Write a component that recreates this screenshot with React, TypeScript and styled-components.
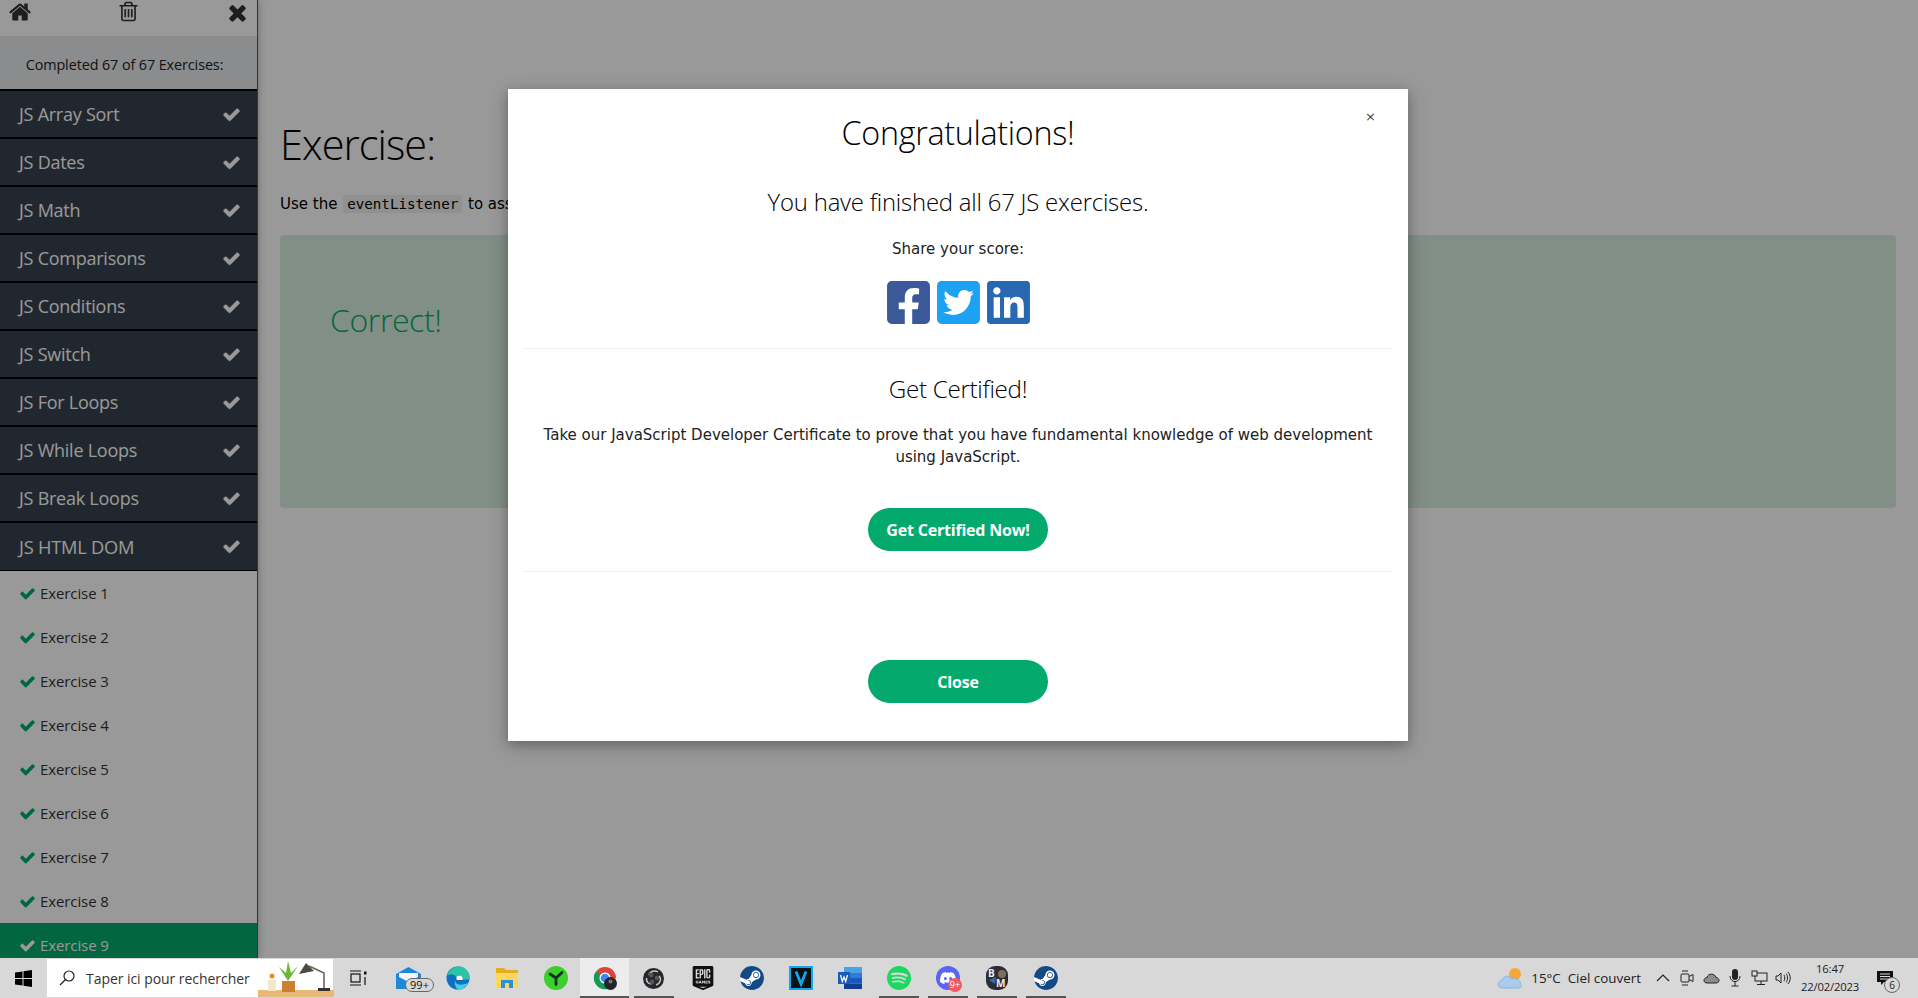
import React from "react";
import styled, { createGlobalStyle } from "styled-components";
import { FaFacebookSquare, FaTwitterSquare, FaLinkedin } from "react-icons/fa";
import { SiEpicgames, SiSteam, SiSpotify, SiDiscord } from "react-icons/si";

const Global = createGlobalStyle`
  html, body { margin: 0; padding: 0; height: 100%; overflow: hidden; }
  body { font-family: "DejaVu Sans", Verdana, sans-serif; color: #000; background: #fff; }
`;

const Page = styled.div`
  display: flex;
  flex-direction: column;
  width: 1918px;
  height: 998px;
  overflow: hidden;
`;
const Viewport = styled.div`
  position: relative;
  flex: 0 0 958px;
  display: flex;
  overflow: hidden;
`;
const Sidebar = styled.aside`
  flex: 0 0 258px;
  background: #fff;
  box-shadow: 0 0 8px rgba(0,0,0,.3);
  border-right: 1px solid #555;
  box-sizing: border-box;
  overflow: hidden;
  z-index: 1;
`;
const SideTop = styled.div`
  height: 36px;
  display: flex;
  justify-content: space-between;
  align-items: flex-start;
  padding: 0 7px 0 8px;
  box-sizing: border-box;
  color: #333;
`;
const Completed = styled.div`
  height: 53px;
  background: #e7e9eb;
  font-family: "Open Sans", sans-serif;
  font-size: 14.4px;
  color: #222;
  display: flex;
  align-items: center;
  justify-content: center;
  padding: 3px 8px 0 0;
  box-sizing: border-box;
  letter-spacing: -0.1px;
`;
const NavRow = styled.div`
  height: 48px;
  background: #38424d;
  border-top: 2px solid #000;
  box-sizing: border-box;
  display: flex;
  align-items: center;
  justify-content: space-between;
  padding: 0 16px 0 19px;
  color: #fff;
  font-family: "Open Sans", sans-serif;
  font-size: 18px;
  letter-spacing: -0.25px;
  &:first-of-type { border-top-width: 3px; }
`;
const NavRowLast = styled(NavRow)`
  border-bottom: 1px solid #000;
  height: 50px;
  font-size: 18.3px;
  padding-bottom: 1px;
`;
const ExRow = styled.div<{ $active?: boolean }>`
  height: 44px;
  display: flex;
  align-items: center;
  gap: 4px;
  padding-left: 19px;
  font-family: "Open Sans", sans-serif;
  font-size: 15px;
  letter-spacing: -0.1px;
  color: ${(p) => (p.$active ? "#fff" : "#333")};
  background: ${(p) => (p.$active ? "#04aa6d" : "transparent")};
  svg { color: ${(p) => (p.$active ? "#fff" : "#04aa6d")}; }
`;
const Main = styled.main`
  flex: 1;
  padding: 115px 22px 0 22px;
  min-width: 0;
`;
const ExerciseTitle = styled.h1`
  margin: 0;
  font-family: "Open Sans", sans-serif;
  font-weight: 300;
  font-size: 41.5px;
  line-height: 58px;
  letter-spacing: -0.95px;
`;
const Instruction = styled.p`
  margin: 19px 0 0;
  font-size: 15px;
  line-height: 24px;
  white-space: nowrap;
`;
const Code = styled.code`
  font-family: "DejaVu Sans Mono", monospace;
  font-size: 14.2px;
  background: #f1f1f1;
  padding: 1px 4px;
  border-radius: 2px;
  margin: 0 1px;
`;
const Panel = styled.div`
  margin-top: 19px;
  height: 273px;
  background: #d9eee1;
  border-radius: 4px;
  padding: 64px 50px 0;
  box-sizing: border-box;
`;
const Correct = styled.div`
  font-family: "Open Sans", sans-serif;
  font-size: 32px;
  line-height: 42px;
  color: #04aa6d;
  letter-spacing: -0.4px;
  font-weight: 300;
`;
const Overlay = styled.div`
  position: absolute;
  inset: 0;
  background: rgba(0,0,0,.4);
  z-index: 2;
`;
const Modal = styled.div`
  position: absolute;
  left: 508px;
  top: 89px;
  width: 900px;
  height: 652px;
  background: #fff;
  box-shadow: 0 4px 10px 0 rgba(0,0,0,.2), 0 4px 20px 0 rgba(0,0,0,.19);
  text-align: center;
  padding: 0 16px;
  box-sizing: border-box;
  z-index: 3;
`;
const ModalClose = styled.span`
  position: absolute;
  top: 19px;
  right: 32px;
  font-size: 13px;
  line-height: 18px;
  color: #444;
`;
const ModalTitle = styled.h2`
  margin: 0;
  padding-top: 22px;
  font-family: "Open Sans", sans-serif;
  font-weight: 300;
  font-size: 32.3px;
  line-height: 42px;
  letter-spacing: -0.3px;
`;
const ModalSub = styled.div`
  margin-top: 34px;
  font-family: "Open Sans", sans-serif;
  font-weight: 300;
  font-size: 23.9px;
  line-height: 30px;
  letter-spacing: -0.2px;
`;
const Share = styled.p`
  margin: 20px 0 0;
  font-size: 15px;
  line-height: 24px;
  color: #222;
`;
const Socials = styled.div`
  margin-top: 20px;
  display: flex;
  justify-content: center;
  gap: 7px;
  height: 43px;
  align-items: center;
`;
const Social = styled.span<{ $c: string }>`
  display: block;
  width: 43px;
  height: 43px;
  color: ${(p) => p.$c};
  svg { display: block; width: 43px; height: 49px; margin-top: -3px; }
`;
const Rule = styled.hr<{ $top: number }>`
  border: 0;
  border-top: 1px solid #eee;
  margin: ${(p) => p.$top}px 0 0;
`;
const CertTitle = styled.h3`
  margin: 25px 0 0;
  font-family: "Open Sans", sans-serif;
  font-weight: 300;
  font-size: 24.2px;
  line-height: 30px;
  letter-spacing: -0.3px;
`;
const CertText = styled.p`
  margin: 20px auto 0;
  width: 850px;
  font-size: 15px;
  line-height: 22px;
  color: #222;
`;
const Pill = styled.div`
  display: flex;
  align-items: center;
  justify-content: center;
  margin: 0 auto;
  width: 180px;
  height: 43px;
  background: #04aa6d;
  color: #fff;
  border-radius: 25px;
  font-family: "Open Sans", sans-serif;
  font-weight: 700;
  font-size: 16px;
  letter-spacing: -0.2px;
`;
const PillTop = styled(Pill)`
  margin-top: 40px;
`;
const PillBottom = styled(Pill)`
  margin-top: 88px;
`;

const Taskbar = styled.footer`
  flex: 0 0 40px;
  display: flex;
  align-items: stretch;
  background: #d8d8d8;
  font-family: "Open Sans", sans-serif;
  color: #222;
`;
const StartBtn = styled.div`
  flex: 0 0 47px;
  display: flex;
  align-items: center;
  justify-content: center;
`;
const Search = styled.div`
  flex: 0 0 286px;
  margin: 1px 0;
  background: #fff;
  display: flex;
  align-items: center;
  position: relative;
  font-size: 14px;
  color: #333;
  letter-spacing: -0.05px;
  padding-left: 11px;
  gap: 10px;
  box-sizing: border-box;
`;
const SearchArt = styled.svg`
  position: absolute;
  right: -1px;
  top: 0;
`;
const TaskIcons = styled.div`
  display: flex;
  align-items: stretch;
`;
const TaskSlot = styled.div<{ $open?: boolean; $active?: boolean }>`
  position: relative;
  width: 49px;
  display: flex;
  align-items: center;
  justify-content: center;
  background: ${(p) => (p.$active ? "#ececec" : "transparent")};
  &::after {
    content: "";
    display: ${(p) => (p.$open ? "block" : "none")};
    position: absolute;
    left: 4.5px;
    right: 4.5px;
    bottom: 0;
    height: 2px;
    background: #555;
  }
`;
const TaskViewSlot = styled(TaskSlot)`
  width: 51px;
  padding-right: 2px;
  box-sizing: border-box;
`;
const ActiveSlot = styled(TaskSlot)`
  &::after { left: 0; right: 0; }
`;
const Badge = styled.span`
  position: absolute;
  left: 21px;
  top: 20px;
  width: 27px;
  height: 12px;
  font-size: 11px;
  line-height: 12px;
  text-align: center;
  background: #d8d8d8;
  border: 1px solid #666;
  border-radius: 7px;
  color: #111;
`;
const RedBadge = styled.span`
  position: absolute;
  left: 25px;
  top: 20px;
  width: 14px;
  height: 14px;
  border-radius: 50%;
  background: #ee5a60;
  color: #fff;
  font-size: 9px;
  line-height: 14px;
  text-align: center;
`;
const RoundIcon = styled.span<{ $bg: string; $fg: string }>`
  display: flex;
  align-items: center;
  justify-content: center;
  width: 24px;
  height: 24px;
  border-radius: 50%;
  background: ${(p) => p.$bg};
  color: ${(p) => p.$fg};
`;
const Tray = styled.div`
  margin-left: auto;
  display: flex;
  align-items: center;
  font-size: 13.4px;
  color: #222;
`;
const Weather = styled.div`
  display: flex;
  align-items: center;
  gap: 8px;
  margin-right: 10px;
  white-space: nowrap;
`;
const TrayIcons = styled.div`
  display: flex;
  align-items: center;
`;
const TraySlot = styled.span`
  width: 24px;
  display: flex;
  align-items: center;
  justify-content: center;
`;
const Clock = styled.div`
  width: 70px;
  text-align: center;
  font-size: 11.3px;
  line-height: 18px;
  letter-spacing: -0.2px;
`;
const Notif = styled.div`
  position: relative;
  width: 53px;
  height: 100%;
  display: flex;
  align-items: center;
  padding-left: 12px;
  box-sizing: border-box;
`;
const NotifBadge = styled.span`
  position: absolute;
  left: 19px;
  top: 19px;
  width: 14px;
  height: 14px;
  border-radius: 50%;
  border: 1px solid #666;
  background: #d8d8d8;
  font-size: 10px;
  line-height: 14px;
  text-align: center;
`;

const Fa4 = ({ d, size }: { d: string; size: number }) => (
  <svg width={size} height={size} viewBox="0 0 1792 1792" fill="currentColor" style={{ display: "block", flex: "none" }}>
    <path d={d} />
  </svg>
);
const CHECK = "M1671 566q0 40-28 68l-724 724-136 136q-28 28-68 28t-68-28l-136-136-362-362q-28-28-28-68t28-68l136-136q28-28 68-28t68 28l294 295 656-657q28-28 68-28t68 28l136 136q28 28 28 68z";
const CLOSE = "M1490 1322q0 40-28 68l-136 136q-28 28-68 28t-68-28l-294-294-294 294q-28 28-68 28t-68-28l-136-136q-28-28-28-68t28-68l294-294-294-294q-28-28-28-68t28-68l136-136q28-28 68-28t68 28l294 294 294-294q28-28 68-28t68 28l136 136q28 28 28 68t-28 68l-294 294 294 294q28 28 28 68z";
const HOME = "M1472 992v480q0 26-19 45t-45 19h-384v-384h-256v384h-384q-26 0-45-19t-19-45v-480q0-1 .5-3t.5-3l575-474 575 474q1 2 1 6zm223-69l-62 74q-8 9-21 11h-3q-13 0-21-7l-692-577-692 577q-12 8-24 7-13-2-21-11l-62-74q-8-10-7-23.500t11-21.500l719-599q32-26 76-26t76 26l244 204v-195q0-14 9-23t23-9h192q14 0 23 9t9 23v408l219 182q10 8 11 21.500t-7 23.500z";
const TRASH = "M704 736v576q0 14-9 23t-23 9h-64q-14 0-23-9t-9-23v-576q0-14 9-23t23-9h64q14 0 23 9t9 23zm256 0v576q0 14-9 23t-23 9h-64q-14 0-23-9t-9-23v-576q0-14 9-23t23-9h64q14 0 23 9t9 23zm256 0v576q0 14-9 23t-23 9h-64q-14 0-23-9t-9-23v-576q0-14 9-23t23-9h64q14 0 23 9t9 23zm128 724v-948h-896v948q0 22 7 40.500t14.500 27 10.500 8.500h832q3 0 10.500-8.500t14.500-27 7-40.500zm-672-1076h448l-48-117q-7-9-17-11h-317q-10 2-17 11zm928 32v64q0 14-9 23t-23 9h-96v948q0 83-47 143.500t-113 60.500h-832q-66 0-113-58.500t-47-141.500v-952h-96q-14 0-23-9t-9-23v-64q0-14 9-23t23-9h309l70-167q15-37 54-63t79-26h320q40 0 79 26t54 63l70 167h309q14 0 23 9t9 23z";

const WinLogo = () => (
  <svg width="17" height="17" viewBox="0 0 17 17" fill="#000">
    <path d="M0 2.500 L7.500 1.500 V8 H0 Z M8.500 1.300 L17 0 V8 H8.500 Z M0 9 H7.500 V15.500 L0 14.500 Z M8.500 9 H17 V17 L8.500 15.700 Z" />
  </svg>
);
const TaskView = () => (
  <svg width="18" height="16" viewBox="0 0 18 16" fill="none" stroke="#111" strokeWidth="1.200">
    <path d="M1 1 H12 M1 15 H12" />
    <rect x="2" y="4" width="9" height="8" />
    <rect x="15" y="1.500" width="2.500" height="3" fill="#111" stroke="none" />
    <path d="M16 7 V15" />
  </svg>
);
const Chrome = () => (
  <svg width="24" height="24" viewBox="0 0 24 24">
    <circle cx="12" cy="12" r="11" fill="#db4437" />
    <path d="M12 12 L2.500 17.500 A11 11 0 0 1 3 5.500 Z" fill="#0f9d58" />
    <path d="M12 12 L2.500 17.500 A11 11 0 0 0 20 20 Z" fill="#0f9d58" />
    <path d="M12 12 L23 12 A11 11 0 0 1 20 20 Z" fill="#f4b400" />
    <circle cx="12" cy="12" r="5.500" fill="#fff" />
    <circle cx="12" cy="12" r="4.300" fill="#4285f4" />
    <circle cx="17.500" cy="17.500" r="6.500" fill="#23252a" />
    <circle cx="17.500" cy="15.500" r="2" fill="#777" />
  </svg>
);
const Edge = () => (
  <svg width="24" height="24" viewBox="0 0 24 24">
    <circle cx="12" cy="12" r="11.500" fill="#0f6fc0" />
    <path d="M1 10 C3 3 9 .5 13 .5 C20 .5 24 7 23.500 13.500 L11 14 C11 10 6 6 1 10 Z" fill="#2cc4a4" />
    <path d="M9 14 C9 19 15 20 22 17 C20 21 16 23.500 12 23.500 C10 22 8 18 9 14 Z" fill="#48d0e8" />
    <path d="M11 14 C9 10 13 9 15 10 C17 11 17 13 16 14 Z" fill="#fff" />
  </svg>
);
const Folder = () => (
  <svg width="22" height="22" viewBox="0 0 22 22">
    <path d="M0 1 H8 L10 3 H22 V21 H0 Z" fill="#e6ad22" />
    <rect x="0" y="6" width="22" height="15" fill="#fbd760" />
    <rect x="5" y="13" width="12" height="8" fill="#2f8fd6" />
    <rect x="9" y="16" width="4" height="5" fill="#fbd760" />
  </svg>
);
const GreenApp = () => (
  <svg width="24" height="24" viewBox="0 0 24 24">
    <circle cx="12" cy="12" r="12" fill="#3ccf2e" />
    <path d="M6 8 L12 12 L18 6.500 M12 12 V18.500" stroke="#10301a" strokeWidth="2.800" fill="none" strokeLinecap="round" />
  </svg>
);
const Mail = () => (
  <svg width="25" height="22" viewBox="0 0 25 22">
    <path d="M0 7 L12.500 0 L25 7 V22 H0 Z" fill="#1e88d8" />
    <path d="M3 6 H22 V10 L12.500 15 L3 10 Z" fill="#f2f8fd" />
  </svg>
);
const Obs = () => (
  <svg width="21" height="21" viewBox="0 0 21 21">
    <circle cx="10.500" cy="10.500" r="10.500" fill="#26262b" />
    <path d="M6 7 C7 3 12 2 15 4 M16 8 C19 11 17 16 13 17 M9.500 15 C6 17 3 14 3.500 10" stroke="#c8c8cc" strokeWidth="1.500" fill="none" />
    <circle cx="8" cy="7" r="2.400" fill="#555" />
    <circle cx="14" cy="10" r="2.400" fill="#555" />
    <circle cx="9" cy="14" r="2.400" fill="#555" />
  </svg>
);
const Vegas = () => (
  <svg width="24" height="24" viewBox="0 0 24 24">
    <rect x="1" y="1" width="22" height="22" fill="#0c1116" stroke="#12a7ea" strokeWidth="2" />
    <path d="M7 5.500 L12 18 L17 5.500" stroke="#12a7ea" strokeWidth="2.800" fill="none" />
  </svg>
);
const Word = () => (
  <svg width="24" height="22" viewBox="0 0 24 22">
    <rect x="6" y="0" width="18" height="5.500" fill="#41a5ee" />
    <rect x="6" y="5.500" width="18" height="5.500" fill="#2b7cd3" />
    <rect x="6" y="11" width="18" height="5.500" fill="#185abd" />
    <rect x="6" y="16.500" width="18" height="5.500" fill="#103f91" />
    <rect x="0" y="5" width="12" height="12" fill="#1a5bbd" />
    <path d="M2.500 8 L4.300 14.500 L6 10 L7.700 14.500 L9.500 8" stroke="#fff" strokeWidth="1.200" fill="none" />
  </svg>
);
const Game = () => (
  <svg width="22" height="24" viewBox="0 0 22 24">
    <rect x="0" y="0" width="22" height="24" rx="9" fill="#2b2d33" />
    <circle cx="16" cy="8" r="4" fill="#7a6f60" />
    <path d="M3 14 L10 11 L9 18 Z" fill="#3a6aa8" />
    <text x="2" y="11" fontFamily="Open Sans, sans-serif" fontSize="10" fontWeight="700" fill="#eee">B</text>
    <text x="10" y="21" fontFamily="Open Sans, sans-serif" fontSize="10" fontWeight="700" fill="#eee">M</text>
  </svg>
);
const CloudSun = () => (
  <svg width="26" height="24" viewBox="0 0 26 24">
    <circle cx="18" cy="8" r="6" fill="#f4a73b" />
    <path d="M5 22 C0 22 0 15 5 14.500 C6 9 13 9 15 13 C19 11 25 15 23 18.500 C26 20 24 22 21 22 Z" fill="#a9cbee" stroke="#7cade2" strokeWidth=".8" />
  </svg>
);

const navItems = ["JS Array Sort","JS Dates","JS Math","JS Comparisons","JS Conditions","JS Switch","JS For Loops","JS While Loops","JS Break Loops"];
const exercises = [1,2,3,4,5,6,7,8];

export default function App() {
  return (
    <Page>
      <Global />
      <Viewport>
        <Sidebar>
          <SideTop>
            <Fa4 d={HOME} size={24} />
            <Fa4 d={TRASH} size={23} />
            <Fa4 d={CLOSE} size={25} />
          </SideTop>
          <Completed>Completed 67 of 67 Exercises:</Completed>
          {navItems.map((n) => (
            <NavRow key={n}>{n}<Fa4 d={CHECK} size={19} /></NavRow>
          ))}
          <NavRowLast>JS HTML DOM<Fa4 d={CHECK} size={19} /></NavRowLast>
          {exercises.map((n) => (
            <ExRow key={n}><Fa4 d={CHECK} size={17} />Exercise {n}</ExRow>
          ))}
          <ExRow $active><Fa4 d={CHECK} size={17} />Exercise 9</ExRow>
        </Sidebar>
        <Main>
          <ExerciseTitle>Exercise:</ExerciseTitle>
          <Instruction>Use the <Code>eventListener</Code> to assign an onclick event to the button element.</Instruction>
          <Panel><Correct>Correct!</Correct></Panel>
        </Main>
        <Overlay />
        <Modal>
          <ModalClose>×</ModalClose>
          <ModalTitle>Congratulations!</ModalTitle>
          <ModalSub>You have finished all 67 JS exercises.</ModalSub>
          <Share>Share your score:</Share>
          <Socials>
            <Social $c="#3b5998"><FaFacebookSquare /></Social>
            <Social $c="#1da1f2"><FaTwitterSquare /></Social>
            <Social $c="#2867b2"><FaLinkedin /></Social>
          </Socials>
          <Rule $top={24} />
          <CertTitle>Get Certified!</CertTitle>
          <CertText>Take our JavaScript Developer Certificate to prove that you have fundamental knowledge of web development using JavaScript.</CertText>
          <PillTop>Get Certified Now!</PillTop>
          <Rule $top={20} />
          <PillBottom>Close</PillBottom>
        </Modal>
      </Viewport>
      <Taskbar>
        <StartBtn><WinLogo /></StartBtn>
        <Search>
          <svg width="18" height="18" viewBox="0 0 18 18" fill="none" stroke="#222" strokeWidth="1.200">
            <circle cx="11" cy="7" r="5" />
            <path d="M7.500 10.500 L2 16" />
          </svg>
          Taper ici pour rechercher
          <SearchArt width="76" height="38" viewBox="0 0 76 38">
            <rect x="0" y="31" width="76" height="7" fill="#e8b878" />
            <rect x="10" y="21" width="8" height="11" fill="#f5e6c8" />
            <circle cx="14" cy="17" r="2.500" fill="#f08a24" />
            <rect x="24" y="22" width="13" height="11" fill="#cf7f34" />
            <path d="M30 22 L21 8 L28 14 L30 2 L33 14 L40 7 Z" fill="#6fb53a" />
            <path d="M41 15 L48 4 L56 12 Z" fill="#4d4a42" />
            <path d="M51 7 L66 14 L66 31" stroke="#6b665a" strokeWidth="1.600" fill="none" />
            <rect x="60" y="29" width="12" height="3" fill="#333" />
          </SearchArt>
        </Search>
        <TaskIcons>
          <TaskViewSlot><TaskView /></TaskViewSlot>
          <TaskSlot><Mail /><Badge>99+</Badge></TaskSlot>
          <TaskSlot><Edge /></TaskSlot>
          <TaskSlot><Folder /></TaskSlot>
          <TaskSlot><GreenApp /></TaskSlot>
          <ActiveSlot $open $active><Chrome /></ActiveSlot>
          <TaskSlot $open><Obs /></TaskSlot>
          <TaskSlot><SiEpicgames size={24} color="#111" /></TaskSlot>
          <TaskSlot><RoundIcon $bg="#fff" $fg="#134a85"><SiSteam size={24} /></RoundIcon></TaskSlot>
          <TaskSlot><Vegas /></TaskSlot>
          <TaskSlot><Word /></TaskSlot>
          <TaskSlot $open><SiSpotify size={24} color="#1ed760" /></TaskSlot>
          <TaskSlot $open><RoundIcon $bg="#5865f2" $fg="#fff"><SiDiscord size={16} /></RoundIcon><RedBadge>9+</RedBadge></TaskSlot>
          <TaskSlot $open><Game /></TaskSlot>
          <TaskSlot $open><RoundIcon $bg="#fff" $fg="#134a85"><SiSteam size={24} /></RoundIcon></TaskSlot>
        </TaskIcons>
        <Tray>
          <Weather><CloudSun />15°C&nbsp;&nbsp;Ciel couvert</Weather>
          <TrayIcons>
            <TraySlot><svg width="14" height="10" viewBox="0 0 14 10" fill="none" stroke="#222" strokeWidth="1.200"><path d="M1 8 L7 2 L13 8" /></svg></TraySlot>
            <TraySlot><svg width="16" height="18" viewBox="0 0 16 18" fill="none" stroke="#222"><rect x="2" y="5" width="8" height="8" rx="1" /><path d="M3 2 H9 M3 16 H9 M10 7.500 L14 5.500 V12.500 L10 10.500" /></svg></TraySlot>
            <TraySlot><svg width="17" height="12" viewBox="0 0 17 12" stroke="#222" strokeWidth="1"><path d="M4 11 C0 11 0 6 4 5.500 C5 1 12 1 13 5.500 C17 6 17 11 13 11 Z" fill="#8c8c8c" /></svg></TraySlot>
            <TraySlot><svg width="12" height="18" viewBox="0 0 12 18"><rect x="3" y="0" width="6" height="11" rx="3" fill="#222" /><path d="M1 7 C1 14.500 11 14.500 11 7 M6 13 V17 M2.500 17 H9.500" stroke="#222" fill="none" /></svg></TraySlot>
            <TraySlot><svg width="17" height="16" viewBox="0 0 17 16" fill="none" stroke="#222"><rect x="4" y="3" width="12" height="8" /><path d="M10 11 V14 M6 14.500 H14" /><rect x="1" y="1" width="5" height="5" fill="#d8d8d8" /></svg></TraySlot>
            <TraySlot><svg width="16" height="14" viewBox="0 0 16 14" fill="none" stroke="#222"><path d="M1 5 H3 L6 2 V12 L3 9 H1 Z M9 4 C10 6 10 8 9 10 M11 2.500 C13 5 13 9 11 11.500 M13 1 C16 5 16 9 13 13" /></svg></TraySlot>
          </TrayIcons>
          <Clock>16:47<br />22/02/2023</Clock>
          <Notif>
            <svg width="16" height="16" viewBox="0 0 16 16"><path d="M0 1 H16 V12 H7 L4 15 V12 H0 Z" fill="#111" /><path d="M3 4 H13 M3 6.500 H13 M3 9 H13" stroke="#ddd" /></svg>
            <NotifBadge>6</NotifBadge>
          </Notif>
        </Tray>
      </Taskbar>
    </Page>
  );
}
